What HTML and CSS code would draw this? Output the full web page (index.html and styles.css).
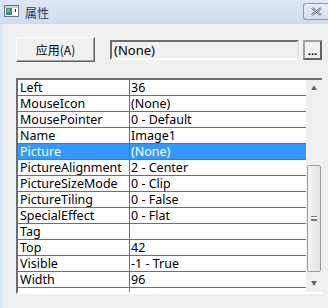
FILE: index.html
```html
<!DOCTYPE html>
<html lang="zh">
<head>
    <meta charset="UTF-8">
    <title>属性</title>
    <link rel="stylesheet" href="styles.css">
</head>
<body>
    <div class="ventana">
        <div class="titulo">
            <svg class="icono" width="15" height="12" viewBox="0 0 15 12">
                <rect x="0.5" y="0.5" width="14" height="11" fill="#fff" stroke="#6d7680"/>
                <rect x="1" y="1" width="13" height="2" fill="#c9d2dc"/>
                <rect x="2" y="3" width="6" height="7" fill="#3d8a7a"/>
                <rect x="3" y="4" width="3" height="3" fill="#6fb6a2"/>
                <rect x="11" y="4" width="1" height="3" fill="#222"/>
            </svg>
            <span class="titulo-texto">属性</span>
            <div class="cerrar">
                <svg width="13" height="9" viewBox="0 0 13 9">
                    <path d="M2 1 L11 8 M11 1 L2 8" stroke="#4a5460" stroke-width="2.2" fill="none"/>
                    <path d="M2 1 L11 8 M11 1 L2 8" stroke="#fff" stroke-width="0.8" fill="none"/>
                </svg>
            </div>
        </div>

        <div class="barra">
            <button class="aplicar">应用(A)</button>
            <div class="campo">(None)</div>
            <button class="puntos">...</button>
        </div>

        <div class="rejilla">
            <div class="filas" id="filas"></div>
            <div class="scroll">
                <div class="flecha">&#9650;</div>
                <div class="pista">
                    <div class="pulgar"><span class="grip"></span></div>
                </div>
                <div class="flecha">&#9660;</div>
            </div>
        </div>
    </div>

    <script>
        const propiedades = [
            ["Left", "36"],
            ["MouseIcon", "(None)"],
            ["MousePointer", "0 - Default"],
            ["Name", "Image1"],
            ["Picture", "(None)", true],
            ["PictureAlignment", "2 - Center"],
            ["PictureSizeMode", "0 - Clip"],
            ["PictureTiling", "0 - False"],
            ["SpecialEffect", "0 - Flat"],
            ["Tag", ""],
            ["Top", "42"],
            ["Visible", "-1 - True"],
            ["Width", "96"],
            ["", ""]
        ];

        const filas = document.getElementById("filas");
        propiedades.forEach(p => {
            filas.innerHTML += `
                <div class="fila${p[2] ? " activa" : ""}">
                    <div class="nombre">${p[0]}</div>
                    <div class="valor">${p[1]}</div>
                </div>
            `;
        });
    </script>
</body>
</html>
```

FILE: styles.css
```css
* {
    margin: 0;
    padding: 0;
    box-sizing: border-box;
    font-family: 'Noto Sans', 'Noto Sans CJK SC', sans-serif;
}
body {
    background-color: #f0f0f0;
    width: 328px;
    height: 308px;
    overflow: hidden;
}
.ventana {
    height: 308px;
    border-left: 3px solid #dbe6f3;
    background: #f0f0f0;
}
.titulo {
    height: 24px;
    margin-left: -3px;
    background: linear-gradient(#dde8f5, #cddcee);
    display: flex;
    align-items: flex-start;
    position: relative;
}
.icono {
    margin: 5px 0 0 4px;
}
.titulo-texto {
    font-size: 12px;
    color: #1e395b;
    margin: 4px 0 0 6px;
    font-family: 'Noto Sans CJK SC', sans-serif;
}
.cerrar {
    position: absolute;
    right: 0;
    top: 3px;
    width: 25px;
    height: 17px;
    border: 1px solid #8d9aab;
    border-right: none;
    border-radius: 3px 0 0 3px;
    background: linear-gradient(#e6edf6, #d3deeb);
    display: flex;
    align-items: center;
    justify-content: center;
}
.barra {
    display: flex;
    align-items: flex-start;
    padding: 13px 0 0 13px;
    height: 54px;
}
button {
    background: #f0f0f0;
    font-size: 12px;
    color: #000;
}
.aplicar {
    width: 79px;
    height: 25px;
    border: 1px solid;
    border-color: #fff #646464 #646464 #fff;
    box-shadow: inset -1px -1px 0 #a0a0a0;
    font-family: 'Noto Sans CJK SC', sans-serif;
}
.campo {
    margin: 3px 0 0 15px;
    width: 189px;
    height: 20px;
    border: 2px solid;
    border-color: #6e6e6e #e3e3e3 #fff #6e6e6e;
    font-size: 13px;
    line-height: 16px;
    padding-left: 2px;
}
.puntos {
    margin: 3px 0 0 4px;
    width: 19px;
    height: 20px;
    border: 2px solid;
    border-color: #a0a0a0 #646464 #646464 #a0a0a0;
    font-size: 11px;
    font-weight: bold;
    line-height: 12px;
    padding-top: 2px;
}
.rejilla {
    margin-left: 13px;
    width: 306px;
    height: 216px;
    display: flex;
    border: 2px solid;
    border-color: #6d6d6d #fff #fff #6d6d6d;
    border-right: none;
    background: #fff;
}
.filas {
    flex: 1;
    overflow: hidden;
}
.fila {
    display: flex;
    height: 16px;
    border-bottom: 1px solid #6f6f6f;
    font-size: 12.5px;
    line-height: 15px;
}
.nombre {
    width: 112px;
    padding-left: 2px;
    border-right: 1px solid #6f6f6f;
    white-space: nowrap;
    overflow: hidden;
}
.valor {
    flex: 1;
    padding-left: 1px;
}
.activa {
    background: #3399ff;
    color: #fff;
}
.scroll {
    width: 16px;
    background: #f0f0f0;
    display: flex;
    flex-direction: column;
}
.flecha {
    height: 17px;
    font-size: 6px;
    color: #606060;
    text-align: center;
    line-height: 17px;
}
.pista {
    flex: 1;
    display: flex;
    flex-direction: column;
    justify-content: flex-end;
    padding-bottom: 3px;
}
.pulgar {
    height: 107px;
    margin: 0 1px;
    border: 1px solid #9b9b9b;
    border-radius: 2px;
    background: linear-gradient(90deg, #f4f4f4, #e2e2e2);
    display: flex;
    align-items: center;
    justify-content: center;
}
.grip {
    width: 6px;
    height: 5px;
    border-top: 1px solid #777;
    border-bottom: 1px solid #777;
    box-shadow: inset 0 1px 0 #fff, inset 0 -1px 0 #777;
}
```
